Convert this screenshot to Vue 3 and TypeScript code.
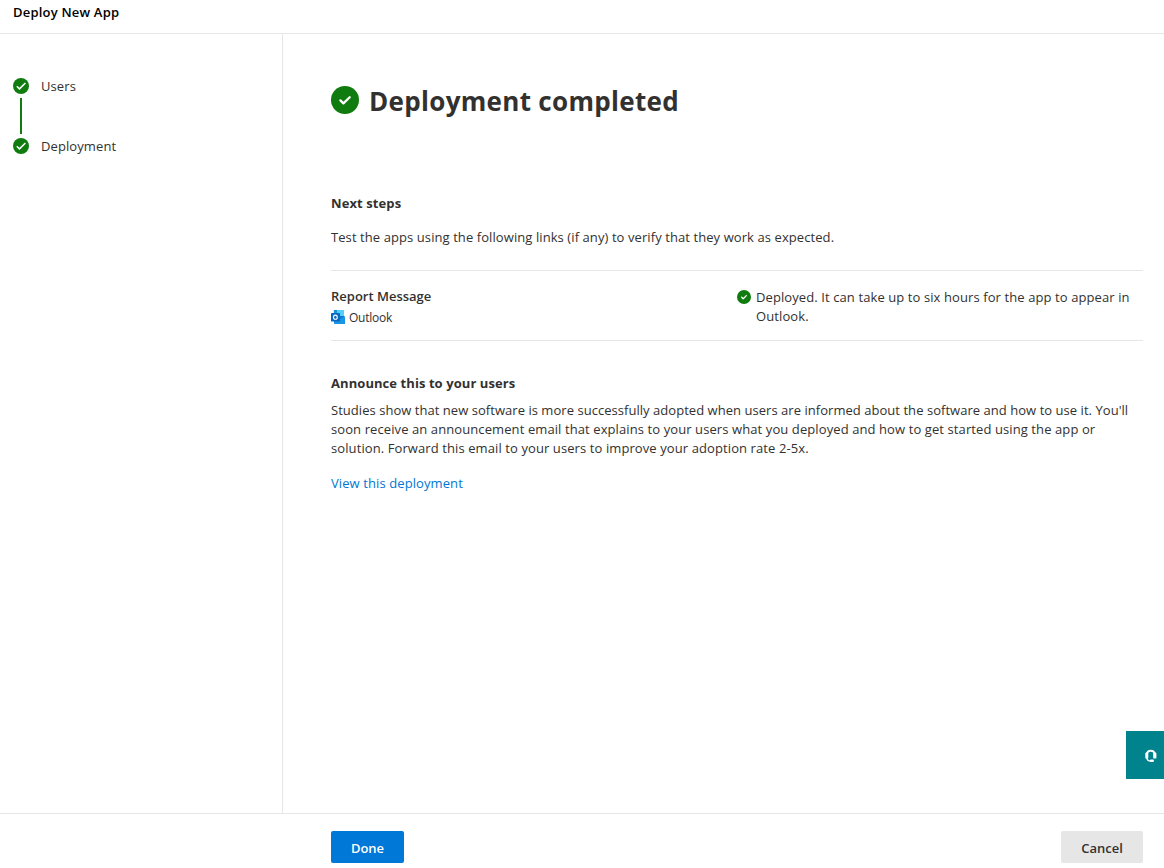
<script setup lang="ts">
interface Step {
  id: string
  label: string
}

const steps: Step[] = [
  { id: 'users', label: 'Users' },
  { id: 'deployment', label: 'Deployment' },
]
</script>

<template>
  <div class="page">
    <header class="topbar"><span class="app-title">Deploy New App</span></header>

    <div class="body">
      <nav class="steps">
        <div v-for="step in steps" :key="step.id" class="step">
          <svg class="step-icon" viewBox="0 0 16 16">
            <circle cx="8" cy="8" r="8" fill="#107c10" />
            <path d="M3.8 8.2l2.7 2.7L12.4 5" fill="none" stroke="#fff" stroke-width="1.5" />
          </svg>
          <span class="step-label">{{ step.label }}</span>
        </div>
      </nav>

      <main class="content">
        <div class="heading">
          <svg class="heading-icon" viewBox="0 0 28 28">
            <circle cx="14" cy="14" r="14" fill="#107c10" />
            <path d="M9.4 14.4l3 3 6.3-6.2" fill="none" stroke="#fff" stroke-width="2.3" stroke-linecap="round" stroke-linejoin="round" />
          </svg>
          <h1>Deployment completed</h1>
        </div>

        <h2 class="next">Next steps</h2>
        <p class="hint">Test the apps using the following links (if any) to verify that they work as expected.</p>

        <section class="app-row">
          <div class="app-info">
            <div class="app-name">Report Message</div>
            <div class="host">
              <svg class="outlook" viewBox="0 0 14 14">
                <path d="M3.3 0h9.2q.5 0 .5.5V8H2.8V.5q0-.5.5-.5z" fill="#28a8ea" />
                <path d="M3 0h5v3H3z" fill="#1490df" />
                <path d="M6 0h6.5q.5 0 .5.5V6H6z" fill="#50d0fa" />
                <path d="M3 6h5v5H3z" fill="#0364b8" />
                <path d="M8 6h5v3L8 10z" fill="#0f78d0" />
                <path d="M3 11l5-1 6-4v7.4q0 .6-.6.6H3.6q-.6 0-.6-.6z" fill="#1c94e4" />
                <rect y="3" width="9" height="8.5" rx=".6" fill="#0869c4" />
                <ellipse cx="4.4" cy="7.2" rx="1.9" ry="2.1" fill="none" stroke="#fff" stroke-width="1.1" />
              </svg>
              <span class="host-name">Outlook</span>
            </div>
          </div>
          <div class="status">
            <svg class="status-icon" viewBox="0 0 28 28">
              <circle cx="14" cy="14" r="14" fill="#107c10" />
              <path d="M9.4 14.4l3 3 6.3-6.2" fill="none" stroke="#fff" stroke-width="2.6" stroke-linecap="round" stroke-linejoin="round" />
            </svg>
            <p>Deployed. It can take up to six hours for the app to appear in<br />Outlook.</p>
          </div>
        </section>

        <h2 class="announce">Announce this to your users</h2>
        <p class="details">
          <span class="lead">Studies show that new software is more successfully adopted when users are informed about the software and how to use it. You'll</span><br />
          <span>soon receive an announcement email that explains to your users what you deployed and how to get started using the app or</span><br />
          <span>solution. Forward this email to your users to improve your adoption rate 2-5x.</span>
        </p>
        <a class="view-link">View this deployment</a>
      </main>
    </div>

    <footer class="actions">
      <button class="btn primary"><span>Done</span></button>
      <button class="btn"><span>Cancel</span></button>
    </footer>

    <aside class="support">
      <svg class="headset" viewBox="0 0 12 14">
        <path d="M2 7.5V5.4q0-3.6 3.8-3.6t3.8 3.6v2.1" fill="none" stroke="#fff" stroke-width="1.9" />
        <rect x=".3" y="3.6" width="3" height="6" rx="1.2" fill="#fff" />
        <rect x="8.2" y="3.6" width="3.2" height="6" rx="1.2" fill="#fff" />
        <path d="M1.9 9q.2 3 4 3" fill="none" stroke="#fff" stroke-width="1.5" />
        <rect x="5" y="10.4" width="3.8" height="2.6" rx=".8" fill="#fff" />
      </svg>
    </aside>
  </div>
</template>

<style>
html,
body {
  background: #fff;
  overflow: hidden;
}
</style>

<style scoped>
.page {
  position: relative;
  box-sizing: border-box;
  display: flex;
  flex-direction: column;
  height: 868px;
  overflow: hidden;
  color: #323130;
  font-family: "Open Sans", "Noto Sans", sans-serif;
  font-size: 13px;
  line-height: 19px;
  letter-spacing: 0.095px;
  white-space: nowrap;
}
h1,
h2,
p {
  margin: 0;
}
svg {
  display: block;
  flex: none;
}
.topbar {
  box-sizing: border-box;
  height: 34px;
  padding: 3px 13px 0;
  border-bottom: 1px solid #e6e6e6;
  color: #000;
  font-weight: 600;
  letter-spacing: 0.2px;
}
.body {
  display: flex;
  height: 779px;
}
.steps {
  box-sizing: border-box;
  width: 283px;
  padding: 44px 0 0 13px;
  border-right: 1px solid #e6e6e6;
}
.step {
  position: relative;
  display: flex;
  align-items: flex-start;
  gap: 12px;
  height: 60px;
}
.step-icon {
  width: 16px;
  height: 16px;
}
.step-label {
  margin-top: -1px;
}
.step:first-child::after {
  content: '';
  position: absolute;
  left: 7px;
  top: 20px;
  width: 2px;
  height: 36px;
  background: #107c10;
}
.content {
  width: 812px;
  padding: 52px 0 0 48px;
}
.heading {
  display: flex;
  gap: 10px;
  height: 108px;
}
.heading-icon {
  width: 28px;
  height: 28px;
}
h1 {
  font-size: 26px;
  line-height: 30px;
  font-weight: 700;
  letter-spacing: 0.31px;
}
h2 {
  font-size: 13px;
  line-height: 19px;
  font-weight: 700;
}
.hint {
  margin-top: 15px;
  letter-spacing: 0.082px;
}
.app-row {
  display: flex;
  box-sizing: border-box;
  height: 71px;
  margin-top: 23px;
  border: solid #e6e6e6;
  border-width: 1px 0;
}
.app-info {
  width: 406px;
  padding-top: 16px;
}
.app-name {
  font-weight: 600;
  letter-spacing: 0;
}
.host {
  display: flex;
  gap: 4px;
  margin-top: 4px;
  font-size: 12px;
  line-height: 16px;
  letter-spacing: -0.25px;
}
.outlook {
  width: 14px;
  height: 14px;
}
.status {
  display: flex;
  gap: 5px;
  padding-top: 17px;
}
.status-icon {
  width: 14px;
  height: 14px;
  margin-top: 2px;
}
.announce {
  margin-top: 33px;
  letter-spacing: 0.07px;
}
.details {
  margin-top: 8px;
}
.lead {
  letter-spacing: 0.04px;
}
.view-link {
  display: block;
  margin-top: 16px;
  color: #0078d4;
}
.actions {
  box-sizing: border-box;
  display: flex;
  justify-content: space-between;
  height: 55px;
  padding: 17px 21px 0 331px;
  border-top: 1px solid #e6e6e6;
}
.btn {
  width: 82px;
  height: 32px;
  padding: 2px 0 0;
  border: 0;
  border-radius: 2px;
  background: #e6e6e6;
  color: #323130;
  font: 600 13px/20px "Open Sans", "Noto Sans", sans-serif;
}
.primary {
  width: 73px;
  background: #0078d7;
  color: #fff;
}
.support {
  position: absolute;
  right: 0;
  top: 731px;
  box-sizing: border-box;
  width: 38px;
  height: 48px;
  padding: 18px 0 0 19px;
  background: #00838c;
}
.headset {
  width: 12px;
  height: 14px;
}
</style>
